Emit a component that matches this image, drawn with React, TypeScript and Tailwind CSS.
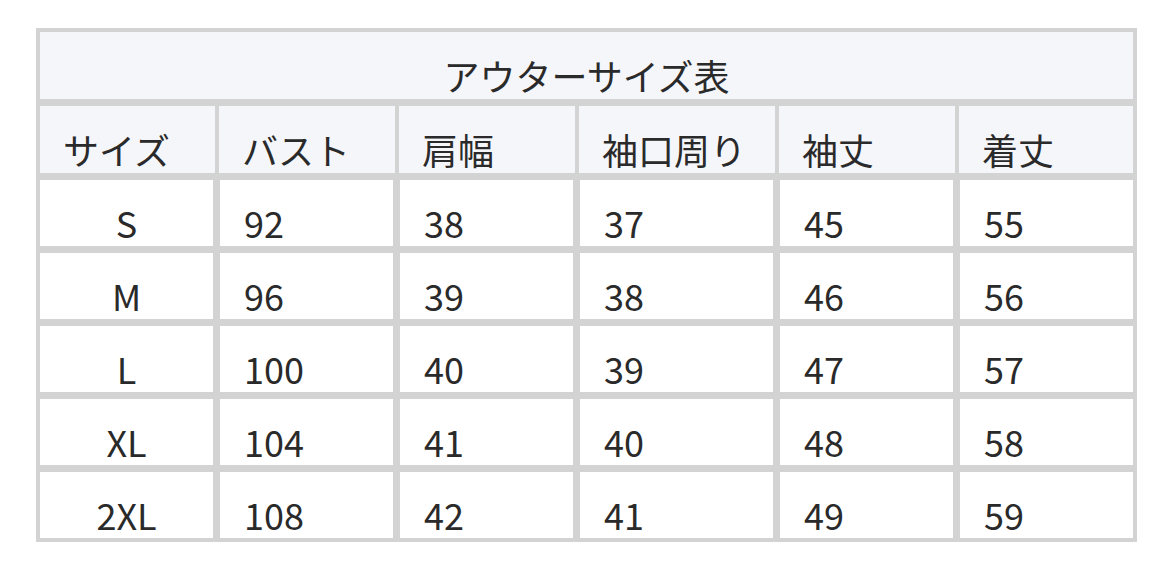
import React from "react";

const font = { fontFamily: '"Noto Sans CJK JP", "Noto Sans", sans-serif' };

const headers: { label: string; w: string }[] = [
  { label: "サイズ", w: "w-[175px]" },
  { label: "バスト", w: "w-[176px]" },
  { label: "肩幅", w: "w-[176px]" },
  { label: "袖口周り", w: "w-[196px]" },
  { label: "袖丈", w: "w-[176px]" },
  { label: "着丈", w: "w-[174px]" },
];

const rows: string[][] = [
  ["S", "92", "38", "37", "45", "55"],
  ["M", "96", "39", "38", "46", "56"],
  ["L", "100", "40", "39", "47", "57"],
  ["XL", "104", "41", "40", "48", "58"],
  ["2XL", "108", "42", "41", "49", "59"],
];

export default function App() {
  return (
    <div className="w-[1172px] h-[569px] bg-white pt-[28px] pl-[36px] text-[#2a2a2a]" style={font}>
      <div className="w-[1101px] border-4 border-[#d3d3d3] bg-[#d3d3d3] flex flex-col gap-[7px]">
        <div className="h-[67px] bg-[#f5f6fa] flex items-center justify-center pt-[18px] text-[36px] leading-none font-normal">
          アウターサイズ表
        </div>
        <div className="h-[67px] flex gap-[4px]">
          {headers.map((h) => (
            <div
              key={h.label}
              className={`${h.w} h-full bg-[#f5f6fa] flex items-center pl-[23px] pt-[18px] text-[36px] leading-none`}
            >
              {h.label}
            </div>
          ))}
        </div>
        {rows.map((r) => (
          <div
            key={r[0]}
            className="h-[66px] grid grid-cols-[173px_173px_173px_193px_173px_173px] gap-[7px]"
          >
            {r.map((c, i) => (
              <div
                key={i}
                className={`bg-white flex items-center pt-[18px] text-[36px] leading-none ${
                  i === 0 ? "justify-center" : "pl-[24px]"
                }`}
              >
                {c}
              </div>
            ))}
          </div>
        ))}
      </div>
    </div>
  );
}
